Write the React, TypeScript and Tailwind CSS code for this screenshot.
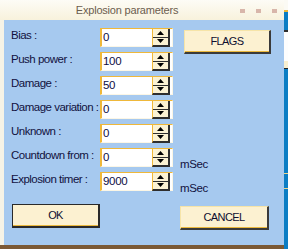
import React from "react";

const font = { fontFamily: '"Liberation Sans", Arial, sans-serif' };

interface Field {
  label: string;
  value: string;
  unit?: string;
}

const fields: Field[] = [
  { label: "Bias :", value: "0" },
  { label: "Push power :", value: "100" },
  { label: "Damage :", value: "50" },
  { label: "Damage variation :", value: "0" },
  { label: "Unknown :", value: "0" },
  { label: "Countdown from :", value: "0", unit: "mSec" },
  { label: "Explosion timer :", value: "9000", unit: "mSec" },
];

const Spinner = () => (
  <div className="flex flex-col w-[18px] h-[18px] bg-[#fbf2d3] border-l border-[#efb83a] border-r-2 border-r-[#2e2e2e] border-b-2 border-b-[#2e2e2e]">
    <div className="flex-1 flex items-center justify-center border-b border-[#2e2e2e]">
      <svg width="7" height="4" viewBox="0 0 7 4">
        <polygon points="3.5,0 7,4 0,4" fill="#000" />
      </svg>
    </div>
    <div className="flex-1 flex items-center justify-center">
      <svg width="7" height="4" viewBox="0 0 7 4">
        <polygon points="0,0 7,0 3.5,4" fill="#000" />
      </svg>
    </div>
  </div>
);

const SpinInput = ({ value }: { value: string }) => (
  <div className="flex w-[73px] h-[19px] bg-white border-t border-l-2 border-[#efb83a] border-r border-b border-r-[#fbf6e6] border-b-[#fbf6e6]">
    <div className="flex-1 pl-[1px] pt-[2px] text-[11.5px] leading-[12px] tracking-[-0.3px] text-[#0e0e45]">{value}</div>
    <Spinner />
    <div className="w-[2px]" />
  </div>
);

const Button = ({ label, width, framed }: { label: string; width: string; framed?: boolean }) => (
  <button
    className={`${width} h-[24px] bg-[#fcf1d1] text-[11px] tracking-[-0.6px] text-[#0e0e30] border-t border-l border-r-2 border-b-2 ${
      framed ? "border-[#2a2a2a]" : "border-t-[#f6e4a8] border-l-[#f6e4a8] border-r-[#3a3a3a] border-b-[#3a3a3a]"
    } shadow-[inset_0_-1px_0_#eab83c]`}
  >
    {label}
  </button>
);

export default function App() {
  return (
    <div className="flex w-[288px] h-[249px] overflow-hidden" style={font}>
      <div className="flex flex-col w-[284px] h-full">
        <div className="h-[20px] flex items-center bg-gradient-to-b from-[#fdfcf6] to-[#f8f2dc]">
          <div className="flex-1 text-center pl-[14px] text-[11px] tracking-[-0.2px] text-[#6b5d4e] pt-[1px]">
            Explosion parameters
          </div>
          <div className="flex gap-[11px] pr-[7px] pt-[1px]">
            <div className="w-[5px] h-[4px] bg-[#d8b6aa]" />
            <div className="w-[5px] h-[4px] bg-[#d8b6aa]" />
            <div className="w-[5px] h-[4px] bg-[#d8b6aa]" />
          </div>
        </div>
        <div className="flex-1 flex flex-col bg-[#a6c9ef] border-l-4 border-[#f6f3e6] pt-[8px]">
          {fields.map((f, i) => (
            <div key={f.label} className="flex items-start h-[24px] pl-[7px]">
              <div className="w-[89px] pt-[1px] text-[11.5px] leading-[12px] tracking-[-0.5px] text-[#111140] whitespace-nowrap overflow-hidden">
                {f.label}
              </div>
              <SpinInput value={f.value} />
              {f.unit && (
                <div className="ml-[7px] pt-[10px] text-[11.5px] leading-[12px] tracking-[-0.4px] text-[#111140]">{f.unit}</div>
              )}
              {i === 0 && (
                <div className="ml-[11px]">
                  <Button label="FLAGS" width="w-[87px]" />
                </div>
              )}
            </div>
          ))}
          <div className="flex mt-[8px] pl-[8px]">
            <Button label="OK" width="w-[88px]" framed />
            <div className="ml-[80px]">
              <Button label="CANCEL" width="w-[89px]" />
            </div>
          </div>
        </div>
        <div className="h-[4px] bg-[#7b5935]" />
      </div>
      <div className="flex flex-col w-[4px] h-full bg-[#0b7dc4]">
        <div className="h-[10px] bg-[#fbfaf4]" />
        <div className="h-[2px] bg-[#efb83a]" />
        <div className="h-[18px]" />
        <div className="h-[2px] bg-[#2e2e2e]" />
        <div className="h-[29px] bg-[#fdfdfd]" />
        <div className="h-[7px] bg-[#f8efd0]" />
        <div className="h-[1px] bg-[#222]" />
        <div className="h-[104px]" />
        <div className="h-[1px] bg-[#efd58a]" />
        <div className="h-[14px]" />
        <div className="h-[1px] bg-[#efd58a]" />
      </div>
    </div>
  );
}
